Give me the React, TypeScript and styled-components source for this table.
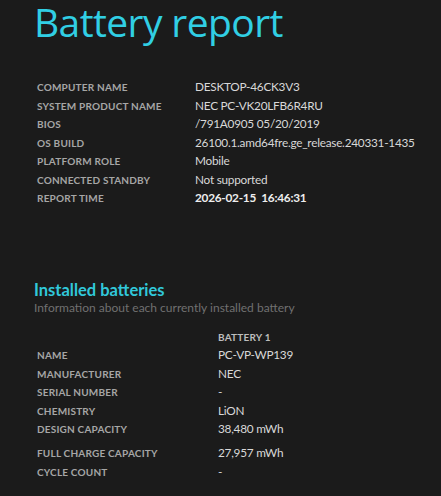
import React from "react";
import styled, { createGlobalStyle } from "styled-components";

const Global = createGlobalStyle`
  html, body { margin: 0; padding: 0; background: #1b1b1b; }
  body { font-family: Lato, "Open Sans", sans-serif; color: #d6d6d6; }
`;

const Page = styled.div`
  padding: 0 0 0 34px;
  min-height: 496px;
  box-sizing: border-box;
`;

const Title = styled.h1`
  margin: 0;
  font-family: "Open Sans", sans-serif;
  font-size: 39px;
  line-height: 44px;
  font-weight: 400;
  letter-spacing: -0.6px;
  color: #31cfe4;
`;

const InfoTable = styled.div`
  display: grid;
  grid-template-columns: 158px auto;
  margin-top: 34px;
  padding-left: 3px;
`;

const Label = styled.div<{ $tall?: boolean }>`
  font-size: 10px;
  font-weight: 700;
  letter-spacing: 0.2px;
  text-transform: uppercase;
  color: #a6a6a6;
  height: ${(p) => (p.$tall ? "24px" : "18.5px")};
  line-height: 18.5px;
  white-space: nowrap;
`;

const Value = styled.div<{ $strong?: boolean; $tall?: boolean }>`
  font-size: 11.8px;
  letter-spacing: -0.25px;
  font-weight: ${(p) => (p.$strong ? 700 : 400)};
  color: ${(p) => (p.$strong ? "#eeeeee" : "#d8d8d8")};
  height: ${(p) => (p.$tall ? "24px" : "18.5px")};
  line-height: 18.5px;
  white-space: pre;
`;

const SectionTitle = styled.h2`
  margin: 72px 0 0 0;
  font-size: 16.5px;
  line-height: 20px;
  font-weight: 700;
  color: #31c8da;
`;

const SectionSub = styled.div`
  font-size: 12px;
  line-height: 16px;
  color: #707070;
  font-weight: 400;
`;

const BatteryTable = styled(InfoTable)`
  grid-template-columns: 181px auto;
  margin-top: 12px;
`;

const ColHead = styled.div`
  font-size: 10px;
  font-weight: 700;
  letter-spacing: 0.2px;
  color: #bdbdbd;
  height: 18.5px;
  line-height: 18.5px;
`;

const info: [string, string, boolean?][] = [
  ["Computer name", "DESKTOP-46CK3V3"],
  ["System product name", "NEC PC-VK20LFB6R4RU"],
  ["BIOS", "/791A0905 05/20/2019"],
  ["OS build", "26100.1.amd64fre.ge_release.240331-1435"],
  ["Platform role", "Mobile"],
  ["Connected standby", "Not supported"],
  ["Report time", "2026-02-15  16:46:31", true],
];

const battery: [string, string, boolean?][] = [
  ["Name", "PC-VP-WP139"],
  ["Manufacturer", "NEC"],
  ["Serial number", "-"],
  ["Chemistry", "LiON"],
  ["Design capacity", "38,480 mWh", true],
  ["Full charge capacity", "27,957 mWh"],
  ["Cycle count", "-"],
];

export default function App() {
  return (
    <Page>
      <Global />
      <Title>Battery report</Title>
      <InfoTable>
        {info.map(([k, v, s]) => (
          <React.Fragment key={k}>
            <Label>{k}</Label>
            <Value $strong={s}>{v}</Value>
          </React.Fragment>
        ))}
      </InfoTable>
      <SectionTitle>Installed batteries</SectionTitle>
      <SectionSub>Information about each currently installed battery</SectionSub>
      <BatteryTable>
        <div />
        <ColHead>BATTERY 1</ColHead>
        {battery.map(([k, v, t]) => (
          <React.Fragment key={k}>
            <Label $tall={t}>{k}</Label>
            <Value $tall={t}>{v}</Value>
          </React.Fragment>
        ))}
      </BatteryTable>
    </Page>
  );
}
